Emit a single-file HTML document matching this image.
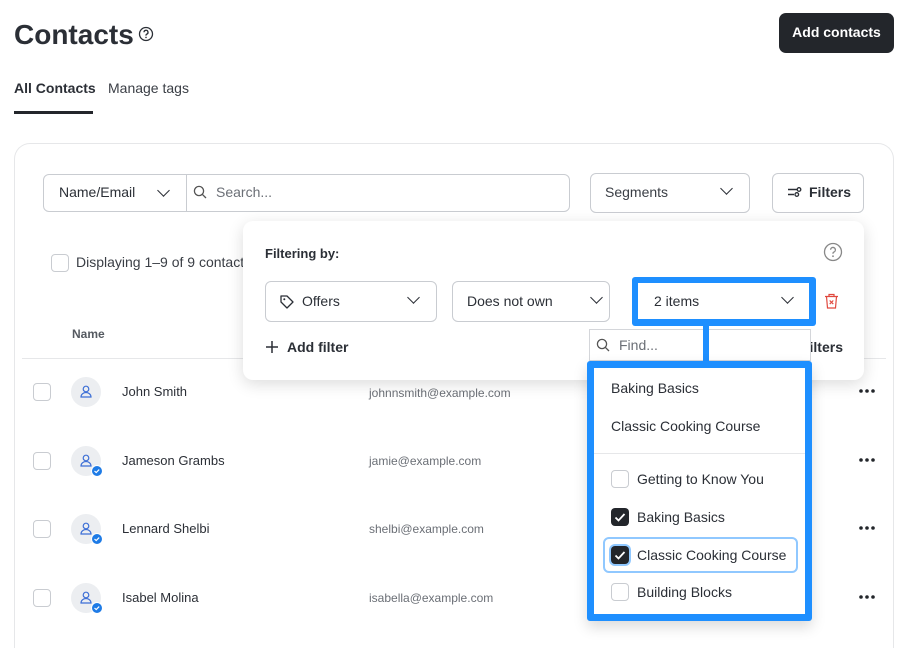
<!DOCTYPE html>
<html style="width:908px;height:648px;overflow:hidden"><head><meta charset="utf-8"><style>
*{box-sizing:border-box;margin:0;padding:0}
body{width:908px;height:648px;overflow:hidden;background:#fff;font-family:"Liberation Sans",sans-serif;color:#2b2f36;position:relative}
.a{position:absolute}
.t{position:absolute;white-space:nowrap;line-height:1}
.sel{position:absolute;border:1px solid #c9ccd1;border-radius:6px;background:#fff}
.chev{position:absolute;width:9px;height:9px;border-right:1.6px solid #2b2f36;border-bottom:1.6px solid #2b2f36;transform:rotate(45deg)}
.cb{position:absolute;width:18px;height:18px;border:1px solid #c9ccd1;border-radius:4px;background:#fff}
.cbk{position:absolute;width:18px;height:18px;border-radius:4px;background:#23262b}
.av{position:absolute;width:30px;height:30px;border-radius:50%;background:#eceef1}
</style></head><body>
<div class="t" style="left:14px;top:21px;font-size:28px;font-weight:bold">Contacts</div>
<svg class="a" style="left:138px;top:26px" width="16" height="16" viewBox="0 0 16 16"><circle cx="8" cy="8" r="6.5" fill="none" stroke="#2b2f36" stroke-width="1.3"/><path d="M6 6.3a2 2 0 1 1 2.6 1.9c-.5.2-.6.5-.6 1v.4" fill="none" stroke="#2b2f36" stroke-width="1.3"/><circle cx="8" cy="11.4" r=".8" fill="#2b2f36"/></svg>
<div class="a" style="left:779px;top:13px;width:115px;height:40px;background:#23262b;border-radius:7px"></div>
<div class="t" style="left:779px;top:25px;width:115px;text-align:center;color:#fff;font-weight:bold;font-size:14px">Add contacts</div>
<div class="t" style="left:14px;top:81px;font-size:14px;font-weight:bold">All Contacts</div>
<div class="t" style="left:108px;top:81px;font-size:14px;color:#3a3e45">Manage tags</div>
<div class="a" style="left:14px;top:111px;width:79px;height:3px;background:#23262b"></div>

<div class="a" style="left:14px;top:143px;width:880px;height:505px;border:1px solid #e6e7e9;border-bottom:none;border-radius:16px 16px 0 0"></div>

<div class="sel" style="left:43px;top:174px;width:527px;height:38px"></div>
<div class="a" style="left:186px;top:175px;width:1px;height:36px;background:#c9ccd1"></div>
<div class="t" style="left:59px;top:185px;font-size:14px">Name/Email</div>
<div class="chev" style="left:159px;top:186px"></div>
<svg class="a" style="left:193px;top:185px" width="14" height="14" viewBox="0 0 14 14"><circle cx="6" cy="6" r="4.6" fill="none" stroke="#555" stroke-width="1.3"/><path d="M9.4 9.4L13 13" stroke="#555" stroke-width="1.3"/></svg>
<div class="t" style="left:216px;top:185px;font-size:14px;color:#6b6f76">Search...</div>
<div class="sel" style="left:590px;top:173px;width:160px;height:40px"></div>
<div class="t" style="left:605px;top:185px;font-size:14px;color:#3a3e45">Segments</div>
<div class="chev" style="left:722px;top:184px"></div>
<div class="sel" style="left:772px;top:173px;width:92px;height:40px"></div>
<svg class="a" style="left:787px;top:186px" width="15" height="12" viewBox="0 0 15 12"><path d="M1 3.5h9M1 8.5h6" stroke="#2b2f36" stroke-width="1.4"/><circle cx="12" cy="3.5" r="1.8" fill="none" stroke="#2b2f36" stroke-width="1.3"/><circle cx="9.8" cy="8.5" r="1.8" fill="none" stroke="#2b2f36" stroke-width="1.3"/></svg>
<div class="t" style="left:809px;top:185px;font-size:14px;font-weight:bold">Filters</div>

<div class="cb" style="left:51px;top:254px"></div>
<div class="t" style="left:76px;top:255px;font-size:14px;color:#3a3e45">Displaying 1–9 of 9 contacts</div>
<div class="t" style="left:72px;top:328px;font-size:12px;font-weight:bold;color:#555a61">Name</div>
<div class="a" style="left:22px;top:358px;width:864px;height:1px;background:#e6e7e9"></div>

<div class="cb" style="left:33px;top:383px"></div><div class="av" style="left:71px;top:377px"></div>
<div class="cb" style="left:33px;top:452px"></div><div class="av" style="left:71px;top:446px"></div>
<div class="cb" style="left:33px;top:520px"></div><div class="av" style="left:71px;top:514px"></div>
<div class="cb" style="left:33px;top:589px"></div><div class="av" style="left:71px;top:583px"></div>
<svg class="a" style="left:71px;top:377px" width="32" height="240" viewBox="0 0 32 240">
<g fill="none" stroke="#3d6fd6" stroke-width="1.2"><circle cx="15" cy="12" r="2.8"/><path d="M10 20a5 4.5 0 0 1 10 0z"/></g>
<g transform="translate(0,69)" fill="none" stroke="#3d6fd6" stroke-width="1.2"><circle cx="15" cy="12" r="2.8"/><path d="M10 20a5 4.5 0 0 1 10 0z"/></g>
<g transform="translate(0,137)" fill="none" stroke="#3d6fd6" stroke-width="1.2"><circle cx="15" cy="12" r="2.8"/><path d="M10 20a5 4.5 0 0 1 10 0z"/></g>
<g transform="translate(0,206)" fill="none" stroke="#3d6fd6" stroke-width="1.2"><circle cx="15" cy="12" r="2.8"/><path d="M10 20a5 4.5 0 0 1 10 0z"/></g>
<g transform="translate(0,69)"><circle cx="26" cy="25" r="5.5" fill="#1e7be6" stroke="#fff" stroke-width="1"/><path d="M23.5 25l1.7 1.6 3-3" stroke="#fff" stroke-width="1.2" fill="none"/></g>
<g transform="translate(0,137)"><circle cx="26" cy="25" r="5.5" fill="#1e7be6" stroke="#fff" stroke-width="1"/><path d="M23.5 25l1.7 1.6 3-3" stroke="#fff" stroke-width="1.2" fill="none"/></g>
<g transform="translate(0,206)"><circle cx="26" cy="25" r="5.5" fill="#1e7be6" stroke="#fff" stroke-width="1"/><path d="M23.5 25l1.7 1.6 3-3" stroke="#fff" stroke-width="1.2" fill="none"/></g>
</svg>
<div class="t" style="left:122px;top:385px;font-size:13px">John Smith</div>
<div class="t" style="left:122px;top:454px;font-size:13px">Jameson Grambs</div>
<div class="t" style="left:122px;top:522px;font-size:13px">Lennard Shelbi</div>
<div class="t" style="left:122px;top:591px;font-size:13px">Isabel Molina</div>
<div class="t" style="left:369px;top:387px;font-size:12px;color:#6b6f76">johnnsmith@example.com</div>
<div class="t" style="left:369px;top:455px;font-size:12px;color:#6b6f76">jamie@example.com</div>
<div class="t" style="left:369px;top:523px;font-size:12px;color:#6b6f76">shelbi@example.com</div>
<div class="t" style="left:369px;top:592px;font-size:12px;color:#6b6f76">isabella@example.com</div>
<svg class="a" style="left:858px;top:385px" width="20" height="220" viewBox="0 0 20 220" fill="#23262b">
<g><circle cx="3" cy="6" r="1.8"/><circle cx="9" cy="6" r="1.8"/><circle cx="15" cy="6" r="1.8"/></g>
<g transform="translate(0,69)"><circle cx="3" cy="6" r="1.8"/><circle cx="9" cy="6" r="1.8"/><circle cx="15" cy="6" r="1.8"/></g>
<g transform="translate(0,137)"><circle cx="3" cy="6" r="1.8"/><circle cx="9" cy="6" r="1.8"/><circle cx="15" cy="6" r="1.8"/></g>
<g transform="translate(0,206)"><circle cx="3" cy="6" r="1.8"/><circle cx="9" cy="6" r="1.8"/><circle cx="15" cy="6" r="1.8"/></g>
</svg>

<div class="a" style="left:243px;top:221px;width:621px;height:159px;background:#fff;border-radius:10px;box-shadow:0 4px 16px rgba(0,0,0,.14)"></div>
<div class="t" style="left:265px;top:247px;font-size:13px;font-weight:bold">Filtering by:</div>
<svg class="a" style="left:823px;top:242px" width="20" height="20" viewBox="0 0 20 20"><circle cx="10" cy="10" r="8.5" fill="none" stroke="#888" stroke-width="1.3"/><path d="M7.6 7.8a2.4 2.4 0 1 1 3.2 2.3c-.6.2-.8.6-.8 1.2v.5" fill="none" stroke="#888" stroke-width="1.3"/><circle cx="10" cy="14.2" r=".9" fill="#888"/></svg>
<div class="sel" style="left:265px;top:281px;width:172px;height:41px"></div>
<svg class="a" style="left:279px;top:294px" width="16" height="16" viewBox="0 0 16 16"><path d="M2 2h6l6 6-6 6-6-6z" fill="none" stroke="#2b2f36" stroke-width="1.3" stroke-linejoin="round"/><circle cx="5.3" cy="5.3" r="1" fill="#2b2f36"/></svg>
<div class="t" style="left:302px;top:294px;font-size:14px">Offers</div>
<div class="chev" style="left:409px;top:293px"></div>
<div class="sel" style="left:452px;top:281px;width:158px;height:41px"></div>
<div class="t" style="left:467px;top:294px;font-size:14px">Does not own</div>
<div class="chev" style="left:592px;top:293px"></div>
<div class="a" style="left:632px;top:277px;width:184px;height:49px;background:#1e8fff;border-radius:3px"></div>
<div class="a" style="left:638px;top:283px;width:171px;height:36px;background:#fff"></div>
<div class="t" style="left:654px;top:294px;font-size:14px">2 items</div>
<div class="chev" style="left:783px;top:293px"></div>
<svg class="a" style="left:824px;top:293px" width="15" height="16" viewBox="0 0 15 16"><path d="M1 3.5h13M5 3.5V1.5h5v2M2.5 3.5l1 11.5h8l1-11.5M5.7 7.5l3.6 3.6M9.3 7.5l-3.6 3.6" fill="none" stroke="#e0483e" stroke-width="1.2"/></svg>
<svg class="a" style="left:265px;top:340px" width="14" height="14" viewBox="0 0 14 14"><path d="M7 1v12M1 7h12" stroke="#2b2f36" stroke-width="1.5"/></svg>
<div class="t" style="left:287px;top:340px;font-size:14px;font-weight:bold">Add filter</div>
<div class="t" style="right:65px;top:340px;font-size:14px;font-weight:bold">Clear filters</div>

<div class="a" style="left:589px;top:329px;width:222px;height:32px;background:#fff;border:1px solid #d4d6da"></div>
<svg class="a" style="left:596px;top:338px" width="14" height="14" viewBox="0 0 14 14"><circle cx="6" cy="6" r="4.6" fill="none" stroke="#555" stroke-width="1.3"/><path d="M9.4 9.4L13 13" stroke="#555" stroke-width="1.3"/></svg>
<div class="t" style="left:619px;top:338px;font-size:14px;color:#6b6f76">Find...</div>
<div class="a" style="left:703px;top:324px;width:6px;height:40px;background:#1e8fff"></div>

<div class="a" style="left:587px;top:361px;width:225px;height:260px;background:#fff;border:7px solid #1e8fff;border-radius:3px;box-shadow:0 6px 14px rgba(0,0,0,.15)"></div>
<div class="t" style="left:611px;top:381px;font-size:14px">Baking Basics</div>
<div class="t" style="left:611px;top:419px;font-size:14px">Classic Cooking Course</div>
<div class="a" style="left:594px;top:453px;width:211px;height:1px;background:#e6e7e9"></div>
<div class="a" style="left:603px;top:537px;width:195px;height:36px;border:2px solid #90c8ff;border-radius:6px"></div>
<div class="cb" style="left:611px;top:470px"></div>
<div class="cbk" style="left:611px;top:508px"></div>
<div class="a" style="left:609px;top:544px;width:22px;height:22px;border-radius:6px;background:#90c8ff"></div>
<div class="cbk" style="left:611px;top:546px"></div>
<div class="cb" style="left:611px;top:583px"></div>
<svg class="a" style="left:611px;top:508px" width="18" height="60" viewBox="0 0 18 60"><path d="M4.5 9.5l3 3 6-6.5" fill="none" stroke="#fff" stroke-width="1.8"/><path d="M4.5 47.5l3 3 6-6.5" fill="none" stroke="#fff" stroke-width="1.8"/></svg>
<div class="t" style="left:637px;top:472px;font-size:14px">Getting to Know You</div>
<div class="t" style="left:637px;top:510px;font-size:14px">Baking Basics</div>
<div class="t" style="left:637px;top:548px;font-size:14px">Classic Cooking Course</div>
<div class="t" style="left:637px;top:585px;font-size:14px">Building Blocks</div>
</body></html>
